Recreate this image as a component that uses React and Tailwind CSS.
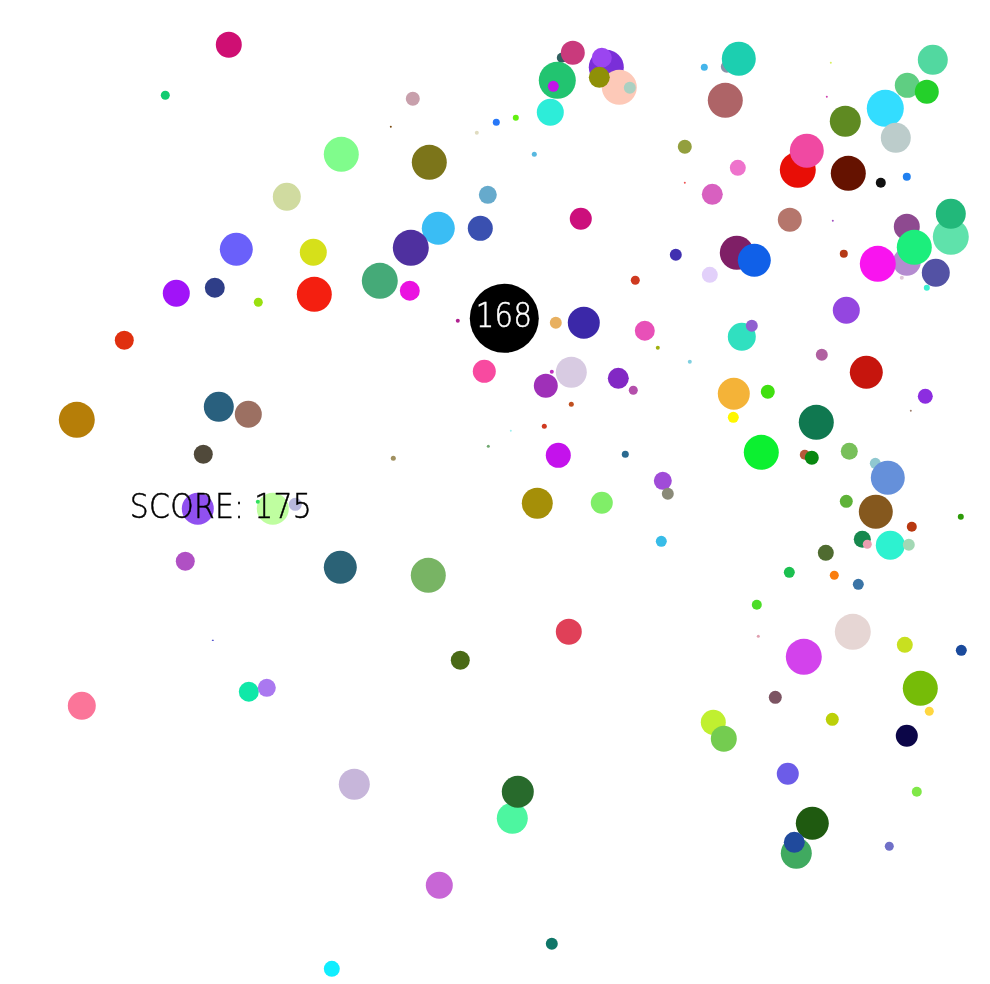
const CIRCLES = [
  [562,58,5,'#2f5f5f'],[573,53,12,'#c93a7c'],[557.5,80,18.5,'#22c470'],[606,67,17.5,'#7a2fd8'],[602,58,10,'#9b45f0'],[619,87,17.5,'#fdc9b8'],[599,77,10.5,'#8f9007'],[630,88,6,'#abd0c2'],[553,86,5.5,'#c313e8'],[550,112,13.5,'#2dedd9'],[516,118,3,'#63f010'],[534,154,2.5,'#58b8e0'],[704,67,3.5,'#45b5ea'],[727,67,6,'#8a92a8'],[738.5,59,17,'#1ccfb0'],[725,100,17.5,'#ae6467'],[684.5,147,7,'#939f3e'],[738,168,8,'#ee73cc'],[712,194,10.5,'#d860c0'],[685,183,1,'#ee5555'],[581,219,11,'#cc0f7c'],
  [831,63,1,'#d8f060'],[827,97,1,'#d040b0'],[845,121,15.5,'#5f8a22'],[885,108,18.5,'#33ddff'],[907.5,85,12.5,'#5fce82'],[927,91.5,12,'#24d02a'],[932.5,60,15,'#52d8a0'],[896,138,15,'#bccccb'],[797.5,170,18,'#e80e06'],[806.5,151,17,'#f049a2'],[848.5,173.5,17.5,'#651200'],[881,183,5,'#111111'],[907,177,4,'#2080f0'],[790,220,12,'#b5766c'],[833,221,1,'#a050c0'],[907,227,13,'#8e4a90'],[950.5,237,18,'#5fe2ab'],[950.5,213.5,15,'#22b87a'],[907,262,14,'#b48cd0'],[914,247,17.5,'#1cee7c'],[877.5,264,18,'#f914ef'],[936,273,14,'#5352a4'],[844,254,4,'#b53a16'],[902,278,2,'#e0c8d8'],[927,288,3,'#3cf0d0'],[846,310,13.5,'#9446e0'],[737,253,17,'#7f1f66'],[754.5,260,16.5,'#1060e8'],
  [198,509,16,'#9050f0'],[273,509,16,'#bffea0'],[258,502,2,'#30e060'],[295,504,6.5,'#b8b8dc'],
  [458,321,2,'#b02090'],[555.5,323,6,'#e8b060'],[583.5,322.5,16,'#3b28a8'],[635,280,4.5,'#cf3a20'],[645,331,10,'#e850b8'],[658,348,2,'#a0b010'],[690,362,2,'#80d0e0'],[484.5,371,11.5,'#f84aa0'],[571,372,15.5,'#d8cbe2'],[552,372,2,'#c030c0'],[545.5,385.5,12,'#9f30b8'],[618.5,378,10.5,'#8228c4'],[633,390,4.5,'#b44fab'],[571,404,2.5,'#c05020'],[544,426,2.5,'#d03a20'],[511,431,1,'#a0f0f0'],[488,446,1.5,'#70a870'],[558,455,12.5,'#c412ec'],[625.5,454,3.5,'#2a6a90'],
  [805,455,5,'#b5593a'],[811.5,457.5,7,'#088810'],[849,451.5,8.5,'#78c05a'],[875,463,5.5,'#90c8d0'],[887.5,477.5,17,'#6590da'],[846,501,6.5,'#5eb238'],[875.5,511.5,17,'#85581e'],[911.5,527,5,'#b83810'],[961,517,3,'#2d9a08'],[862,539,8.5,'#17884e'],[867.5,544,4.5,'#eb9eb0'],[890,545,14.5,'#2df2d0'],[908.5,545,6,'#a2d8b4'],[825.5,553,8,'#4f6b30'],[789,572.5,5.5,'#1cc050'],[834.5,575.5,4.5,'#fa7d0e'],[858,584,5.5,'#3a74a6'],
  [228.5,45,13,'#cf0f73'],[165.5,95,4.5,'#10cc70'],[413,99,7,'#c8a0ac'],[391,127,1,'#7a4a10'],[477,133,2,'#e0dcc0'],[496,122.5,3.5,'#2878f8'],[341,154.5,17.5,'#80fc8c'],[429,162,17.5,'#7c751a'],[287,197,14,'#d0dba0'],[488,194.5,9,'#66aacc'],[438,228,16.5,'#3abdf4'],[480.5,228,12.5,'#3a50b0'],[410.5,248,18,'#4f309f'],[236,249.5,16.5,'#6a60fa'],[313,252,13.5,'#d6e01a'],[380,281,18,'#45aa78'],[410,291,10,'#ea12e0'],[314,294.5,17.5,'#f41f10'],[176,293,13.5,'#a113f8'],[214.5,287.5,10,'#2f3e88'],[258,302.5,4.5,'#9ae010'],[124,340,9.5,'#e0300f'],[77,420,18,'#b67e08'],[219,407,15,'#29607e'],[248.5,414.5,13.5,'#9c7062'],[203,454,9.5,'#50493a'],[393,458,2.5,'#a09060'],[537.5,503,15.5,'#a58f08'],[601.5,502.5,11,'#80ee68'],[662.5,481,9,'#a04cd8'],[668,494,6,'#8a8a78'],[661.5,541,5.5,'#38bce8'],[185,561.5,9.5,'#b050c4'],[340.5,567,16.5,'#2b6276'],[428.5,575,17.5,'#78b464'],[568.5,632,13,'#e04058'],[460.5,660,9.5,'#4a6a16'],[213,640.5,0.8,'#2020c0'],[248.5,692,10,'#10e8a8'],[267,687.5,9,'#aa78f0'],[81.5,706,14,'#fb7599'],[354.5,784.5,15.5,'#c7b6da'],[512.5,818,15.5,'#4df6a0'],[517.5,791.5,16,'#286a2c'],[439,885,13.5,'#c866d6'],[552,944,6,'#0f7668'],[331.5,968.5,8,'#10eeff'],
  [676,254.5,6,'#4030b0'],[710,275,8,'#e2d0fa'],[742,337,14,'#30e0c0'],[751.5,326,6,'#9060d0'],[822,355,6,'#b060a0'],[866,372.5,16.5,'#c6150d'],[925.5,396,7.5,'#8c2de0'],[733.5,393.5,16,'#f4b338'],[768,391.5,7,'#40e010'],[733.5,417,5.5,'#fff700'],[816,422,17.5,'#107850'],[761,452,17.5,'#0cf030'],[911,411,1,'#a08070'],[757,605,5,'#4cdd28'],[758,636,1.5,'#e0a0b0'],[852.5,631.5,18,'#e6d6d4'],[803.5,657,18,'#d342ec'],[905,644.5,8,'#c8e020'],[961,650.5,5.5,'#1a4a9c'],[920,688,17.5,'#76bc08'],[929.5,711.5,4.5,'#ffd740'],[775,697,6.5,'#7c5462'],[713.5,722,12.5,'#c0f030'],[723.5,739,13,'#74cc50'],[832,719.5,6.5,'#bcd008'],[907,736,11,'#0c0648'],[787.5,774,11,'#6c5ce8'],[917,791.5,5,'#80e848'],[812.5,823,16.5,'#1f5a10'],[796,853,15.5,'#40aa60'],[794,842,10.5,'#204a9c'],[889,846,4.5,'#7070c8'],
];

export default function App() {
  return (
    <div className="relative w-[990px] h-[984px] overflow-hidden bg-white font-['DejaVu_Sans',sans-serif] blur-[0.4px] -translate-x-[0.2px] -translate-y-[0.2px]">
      {CIRCLES.map(([x, y, r, c], i) => (
        <div
          key={i}
          className="absolute rounded-full"
          style={{ left: x - r, top: y - r, width: r * 2, height: r * 2, backgroundColor: c }}
        />
      ))}
      <div className="absolute left-[470px] top-[284px] w-[69px] h-[69px] rounded-full bg-black flex items-center justify-center text-white">
        <span className="font-extralight text-[33px] leading-none -mt-[7px] tracking-[0.5px] scale-x-[0.88] [-webkit-text-stroke:0.5px_white]">168</span>
      </div>
      <div className="absolute left-[130px] top-[488px] text-black font-extralight text-[33px] leading-[38px] tracking-[0.3px] whitespace-nowrap origin-left scale-x-[0.905] [-webkit-text-stroke:0.5px_black]">
        SCORE: 175
      </div>
    </div>
  );
}
